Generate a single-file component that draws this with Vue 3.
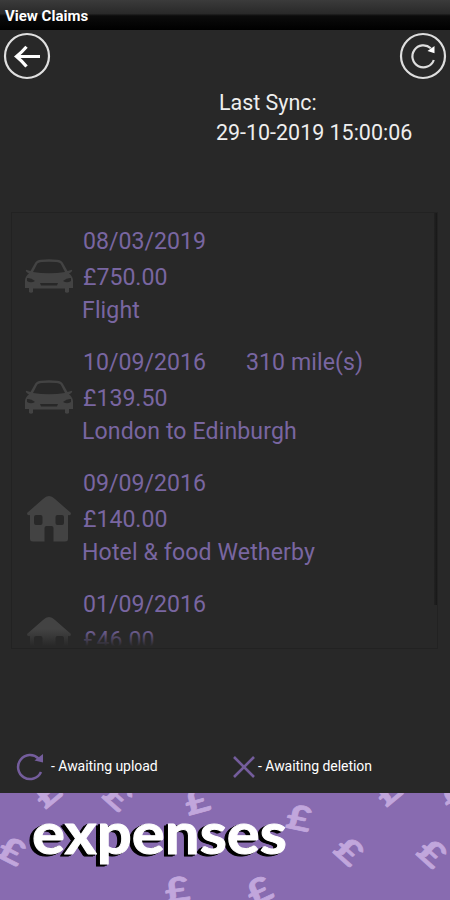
<script setup>
const claims = [
  { date: '08/03/2019', amount: '£750.00', text: 'Flight', icon: 'car' },
  { date: '10/09/2016', amount: '£139.50', text: 'London to Edinburgh', icon: 'car', miles: '310 mile(s)' },
  { date: '09/09/2016', amount: '£140.00', text: 'Hotel & food Wetherby', icon: 'house' },
  { date: '01/09/2016', amount: '£46.00', text: '', icon: 'house' },
]
const pounds = [
  [47, 793, -40], [118, 796, 42], [197, 801, -15], [12, 851, 27], [177, 890, -8],
  [299, 818, 12], [349, 851, 42], [388, 791, -40], [259, 891, -25], [432, 853, 42], [455, 797, -35],
]
</script>

<template>
  <main class="screen">
    <header class="title">View Claims</header>
    <nav class="actions">
      <svg width="50" height="50" viewBox="0 0 50 50" fill="none" stroke="#e0e0e0">
        <circle cx="25" cy="25" r="22" stroke-width="2.2" />
        <path d="M38 25.5H14.5M24.5 15.8Q20 21 14.5 25.5Q20 30 24.5 35.5" stroke="#fff" stroke-width="3.2" />
      </svg>
      <svg width="50" height="50" viewBox="0 0 50 50" fill="none" stroke="#dedede">
        <circle cx="25" cy="25" r="22" stroke-width="2.2" />
        <path d="M32.8 17.2A11 11 0 1 0 35.8 29" stroke-width="2.2" />
        <path d="M36.5 15V22.3L29.5 20Z" fill="#fff" stroke="none" />
      </svg>
    </nav>
    <section class="sync">
      <div class="sync-label">Last Sync:</div>
      <div>29-10-2019 15:00:06</div>
    </section>
    <section class="list">
      <article v-for="claim in claims" :key="claim.date" class="claim">
        <div class="icon" :class="claim.icon">
          <svg v-if="claim.icon === 'car'" width="50" height="36" viewBox="0 0 50 36" fill="#434343">
            <path fill-rule="evenodd" d="M6.5 13L2 11.8Q1 13.5 5 15.5Q1.5 18 1 22V30H5V34Q7 35.5 9 34V30.5H41V34Q43 35.5 45 34V30H49V22Q48.5 18 45 15.5Q49 13.5 48 11.8L43.5 13L39 5Q37.5 2 33 1.7Q25 1 17 1.7Q12.5 2 11 5ZM9 14L13 6.2Q14 4.2 18 4Q25 3.5 32 4Q36 4.2 37 6.2L41 14Q25 16.5 9 14ZM3 20Q7 19.5 11 23Q7 25.5 3 23ZM47 20Q43 19.5 39 23Q43 25.5 47 23ZM16 25H34L33 27.5H17Z" />
          </svg>
          <svg v-else width="46" height="48" viewBox="0 0 46 48" fill="#434343">
            <path fill-rule="evenodd" d="M23 1Q20 1 17 4L1 18Q1 21 4 20V44Q4 46.5 7 46.5H18.5V33Q18.5 31 20.5 31H25.5Q27.5 31 27.5 33V46.5H39Q42 46.5 42 44V20Q45 21 45 18L29 4Q26 1 23 1ZM10 20H14.5Q16.5 20 16.5 22V28Q16.5 30 14.5 30H10Q8 30 8 28V22Q8 20 10 20ZM31.5 20H36Q38 20 38 22V28Q38 30 36 30H31.5Q29.5 30 29.5 28V22Q29.5 20 31.5 20Z" />
          </svg>
        </div>
        <div class="details">
          <div class="date">{{ claim.date }}<span v-if="claim.miles" class="miles">{{ claim.miles }}</span></div>
          <div class="amount">{{ claim.amount }}</div>
          <div class="text">{{ claim.text }}</div>
        </div>
      </article>
      <div class="fade"></div>
      <div class="scrollbar"></div>
    </section>
    <section class="legend">
      <div class="key upload">
        <svg width="30" height="30" viewBox="0 0 30 30" fill="none" stroke="#745d9c">
          <path d="M23.5 6.5A12 12 0 1 0 26 20" stroke-width="2.5" />
          <path d="M28 2V10.5L19.5 8.5Z" fill="#745d9c" stroke="none" />
        </svg>
        <span>- Awaiting upload</span>
      </div>
      <div class="key">
        <svg width="24" height="24" viewBox="0 0 24 24" fill="none" stroke="#745d9c" stroke-width="2.6">
          <path d="M2 2L22 22M22 2L2 22" />
        </svg>
        <span>- Awaiting deletion</span>
      </div>
    </section>
    <footer class="banner">
      <svg width="450" height="107" viewBox="0 793 450 107">
        <text v-for="(p, i) in pounds" :key="i" class="pound" :transform="`translate(${p[0]} ${p[1]}) rotate(${p[2]}) scale(1.25 1)`" y="12">£</text>
        <text class="brand" x="32" y="853.5" textLength="255" lengthAdjust="spacingAndGlyphs">expenses</text>
      </svg>
    </footer>
  </main>
</template>

<style>
body { margin: 0; background: #282828; }
</style>

<style scoped>
.screen { width: 450px; height: 900px; display: flex; flex-direction: column; background: #282828; color: #eee; font-family: Roboto, sans-serif; overflow: hidden; }
.title { height: 30px; flex: none; box-sizing: border-box; padding: 2px 0 0 5px; line-height: 29px; font-size: 15px; font-weight: 700; color: #fff; background: linear-gradient(#3b3b3b, #292929 45%, #0b0b0b 53%, #000); }
.actions { height: 50px; flex: none; box-sizing: border-box; display: flex; justify-content: space-between; padding: 1px 2px 0; }
.sync { box-sizing: border-box; padding: 8px 0 0 216px; height: 132px; flex: none; font-size: 21.45px; line-height: 30px; white-space: nowrap; }
.sync-label { padding-left: 3px; }
.list { position: relative; height: 437px; flex: none; box-sizing: border-box; margin: 0 12px 0 11px; border: 1px solid #222; overflow: hidden; }
.claim { height: 121.1px; display: flex; }
.icon { width: 71px; flex: none; box-sizing: border-box; display: flex; justify-content: center; align-items: center; padding: 4px 0 0 2px; }
.icon.house { padding-top: 7px; }
.details { padding-top: 12px; color: #7966a1; font-size: 23.1px; white-space: nowrap; }
.date { line-height: 34px; display: flex; }
.miles { margin-left: 40px; letter-spacing: 0.1px; }
.amount { line-height: 38px; }
.text { line-height: 28px; margin-left: -1px; letter-spacing: 0.12px; }
.fade { position: absolute; left: 0; right: 8px; bottom: 0; height: 19px; background: linear-gradient(transparent, #282828 90%); }
.scrollbar { position: absolute; right: 0; top: 0; width: 3px; height: 392px; background: linear-gradient(90deg, #222, #181818); }
.legend { height: 144px; flex: none; box-sizing: border-box; padding: 102px 0 0 15px; display: flex; font-size: 14px; color: #fff; }
.key { height: 32px; display: flex; align-items: center; white-space: nowrap; gap: 2px; }
.key span { line-height: 24px; margin-bottom: 3px; letter-spacing: -0.04px; }
.upload { width: 217px; gap: 6px; }
.banner { height: 107px; flex: none; background: #886bb0; overflow: hidden; }
.banner svg { display: block; }
.pound { font: 700 34px Lato, sans-serif; fill: #c1a6dc; stroke: #c1a6dc; stroke-width: 0.8px; text-anchor: middle; }
.brand { font: 700 57px Lato, sans-serif; fill: #fff; stroke: #fff; stroke-width: 1px; stroke-linejoin: round; filter: drop-shadow(-2px 1.5px 0 #000) drop-shadow(-2px 1.5px 0 #000); }
</style>
